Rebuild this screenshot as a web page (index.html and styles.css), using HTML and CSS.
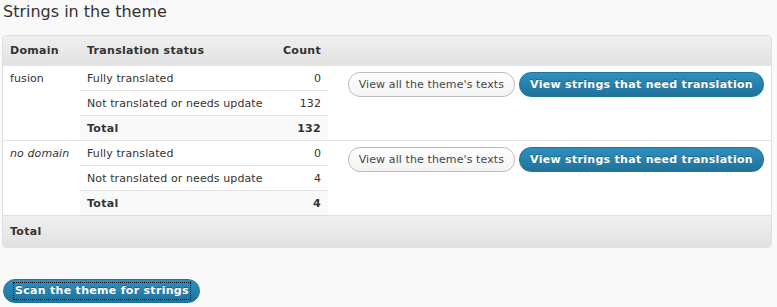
FILE: index.html
```html
<!DOCTYPE html>
<html>
<head>
<meta charset="utf-8">
<link rel="stylesheet" href="styles.css">
</head>
<body>
<div class="page">
  <h3 class="title">Strings in the theme</h3>
  <div class="box">
    <table class="strings">
      <thead>
        <tr>
          <th class="c-domain">Domain</th>
          <th class="c-status">Translation status</th>
          <th class="c-count">Count</th>
          <th class="c-actions"></th>
        </tr>
      </thead>
      <tbody class="group">
        <tr>
          <td class="c-domain" rowspan="3">fusion</td>
          <td class="c-status sep">Fully translated</td>
          <td class="c-count sep">0</td>
          <td class="c-actions" rowspan="3">
            <div class="actions">
              <span class="btn btn-secondary">View all the theme's texts</span>
              <span class="btn btn-primary">View strings that need translation</span>
            </div>
          </td>
        </tr>
        <tr>
          <td class="c-status sep">Not translated or needs update</td>
          <td class="c-count sep">132</td>
        </tr>
        <tr class="subtotal">
          <td class="c-status">Total</td>
          <td class="c-count">132</td>
        </tr>
      </tbody>
      <tbody class="group">
        <tr>
          <td class="c-domain" rowspan="3"><em>no domain</em></td>
          <td class="c-status sep">Fully translated</td>
          <td class="c-count sep">0</td>
          <td class="c-actions" rowspan="3">
            <div class="actions">
              <span class="btn btn-secondary">View all the theme's texts</span>
              <span class="btn btn-primary">View strings that need translation</span>
            </div>
          </td>
        </tr>
        <tr>
          <td class="c-status sep">Not translated or needs update</td>
          <td class="c-count sep">4</td>
        </tr>
        <tr class="subtotal">
          <td class="c-status">Total</td>
          <td class="c-count">4</td>
        </tr>
      </tbody>
      <tfoot>
        <tr>
          <th class="c-domain">Total</th>
          <th></th>
          <th></th>
          <th></th>
        </tr>
      </tfoot>
    </table>
  </div>
  <div class="scan">
    <span class="btn btn-primary btn-scan"><span class="focus">Scan the theme for strings</span></span>
  </div>
</div>
</body>
</html>
```

FILE: styles.css
```css
html, body {
  margin: 0;
  padding: 0;
  background: #f9f9f9;
}
body {
  font-family: "DejaVu Sans", Verdana, sans-serif;
  font-size: 11px;
  letter-spacing: 0.1px;
  color: #333;
}
.page {
  padding: 0 5px 0 2px;
}
.title {
  margin: 0;
  padding: 2px 0 0 1px;
  font-size: 16px;
  font-weight: normal;
  letter-spacing: 0;
  line-height: 20px;
  color: #333;
}
.box {
  margin-top: 13px;
  border: 1px solid #dfdfdf;
  border-radius: 4px;
  overflow: hidden;
  background: #fff;
}
.strings {
  width: 100%;
  border-collapse: separate;
  border-spacing: 0;
}
.strings th {
  font-weight: bold;
  letter-spacing: 0.3px;
  text-align: left;
  background: linear-gradient(#f0f0f0, #e1e1e1);
  color: #333;
}
.strings thead th {
  height: 29px;
  padding: 0;
  border-bottom: 1px solid #e6e6e6;
}
.strings tfoot th {
  height: 31px;
  padding: 0;
  border-top: 1px solid #dfdfdf;
}
.strings td {
  padding: 0;
  height: 24px;
  vertical-align: middle;
}
.c-domain {
  width: 70px;
  padding-left: 7px !important;
}
.strings td.c-domain {
  vertical-align: top;
  padding-top: 6px;
  height: auto;
}
.c-status {
  width: 184px;
  padding-left: 7px !important;
}
.c-count {
  width: 50px;
  text-align: right !important;
  padding-right: 7px !important;
}
.c-actions {
  padding-right: 7px !important;
}
.strings td.c-actions {
  vertical-align: top;
  padding-top: 6px;
}
.sep {
  border-bottom: 1px solid #e4e4e4;
}
.subtotal td {
  background: #f9f9f9;
  font-weight: bold;
  letter-spacing: 0.3px;
}
.group + .group tr:first-child td {
  border-top: 1px solid #e2e2e2;
}
.actions {
  display: flex;
  justify-content: flex-end;
  gap: 4px;
}
.btn {
  display: inline-block;
  box-sizing: border-box;
  height: 25px;
  line-height: 21px;
  padding: 1px 10px;
  border-radius: 12px;
  font-size: 11px;
  white-space: nowrap;
}
.btn-secondary {
  border: 1px solid #bbb;
  background: linear-gradient(#fefefe, #f3f3f3);
  color: #464646;
}
.btn-primary {
  border: 1px solid #21759b;
  background: linear-gradient(#2e90c0, #20729a);
  color: #fff;
  font-weight: bold;
  letter-spacing: 0.3px;
  text-shadow: 0 -1px 0 rgba(0, 0, 0, 0.3);
}
.scan {
  margin-top: 31px;
  padding-left: 1px;
}
.btn-scan {
  height: 24px;
  line-height: 18px;
  padding: 2px 8px 2px 9px;
}
.focus {
  display: inline-block;
  border: 1px dotted #000;
  padding: 0 1px;
  line-height: 16px;
}
```
